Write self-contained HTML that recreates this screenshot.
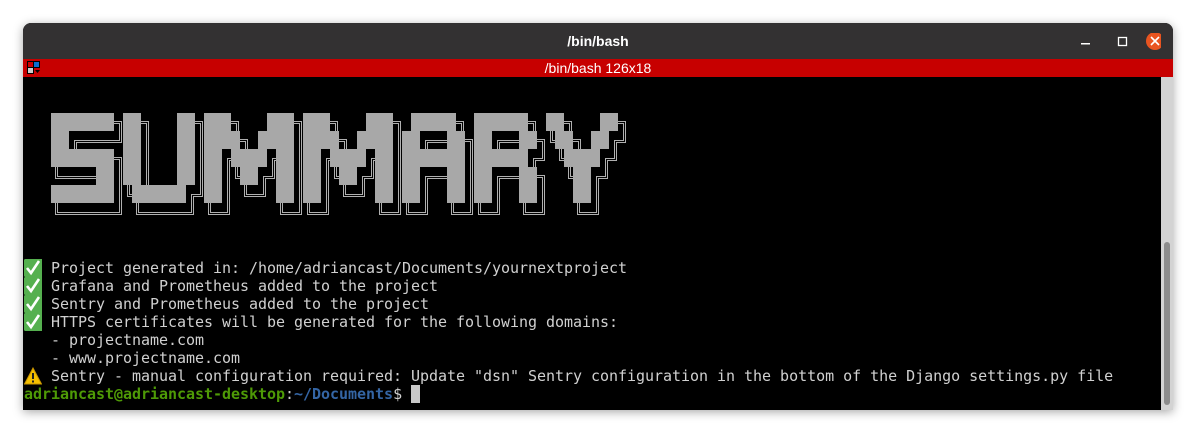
<!DOCTYPE html>
<html><head><meta charset="utf-8"><style>
*{margin:0;padding:0;box-sizing:border-box}
body{width:1193px;height:439px;background:#fff;position:relative;overflow:hidden;font-family:"Liberation Sans",sans-serif}
.win{position:absolute;left:23px;top:23px;width:1150px;height:387px;background:#000;border-radius:8px 8px 0 0;overflow:hidden;box-shadow:0 2px 10px rgba(0,0,0,.35)}
.title{position:absolute;left:0;top:0;width:1150px;height:36px;background:#333132;color:#fff;font-weight:bold;font-size:14px;text-align:center;line-height:37px}
.red{position:absolute;left:0;top:36px;width:1150px;height:18px;background:#c70000;color:#fff;font-size:14px;text-align:center;line-height:18px}
.sb{position:absolute;left:1138px;top:54px;width:12px;height:333px;background:#d3d3d3}
.thumb{position:absolute;left:3px;top:165px;width:6px;height:163px;background:#8c8c8c;border-radius:3px}
.t{position:absolute;left:1px;font-family:"DejaVu Sans Mono",monospace;font-size:15px;letter-spacing:-0.03px;line-height:18px;color:#d0d0d0;white-space:pre}
.g{color:#4e9a06;font-weight:bold}.b{color:#3465a4;font-weight:bold}
.ic{display:inline-block;width:18px;height:18px;vertical-align:top;margin-right:9px}
</style></head><body>
<div class="win">
<div class="title">/bin/bash</div>
<svg style="position:absolute;left:1058px;top:10px" width="80" height="18">
<rect x="0" y="10" width="9" height="1.5" fill="#fff"/>
<rect x="37.5" y="4.5" width="8" height="8" fill="none" stroke="#fff" stroke-width="1.3"/>
<circle cx="74" cy="8" r="9" fill="#e95420"/>
<path d="M70 4L78 12M78 4L70 12" stroke="#fff" stroke-width="1.6"/>
</svg>
<div class="red">/bin/bash 126x18</div>
<svg style="position:absolute;left:4px;top:38px" width="14" height="14">
<rect x="0.5" y="0.5" width="6" height="6" fill="#c00" stroke="#000"/>
<rect x="6.5" y="0.5" width="6" height="6" fill="#0a6fd0" stroke="#000"/>
<rect x="0.5" y="6.5" width="6" height="6" fill="#ccc" stroke="#000"/>
<path d="M8 9h5l-2.5 3z" fill="#000"/>
</svg>
<svg style="position:absolute;left:1px;top:54px" width="1137" height="333">
<defs>
<g id="M"><rect x="180" y="36" width="27" height="18"/><rect x="243" y="36" width="27" height="18"/>
<rect x="180" y="54" width="36" height="18"/><rect x="234" y="54" width="36" height="18"/>
<rect x="180" y="72" width="18" height="54"/><rect x="207" y="72" width="36" height="18"/><rect x="252" y="72" width="18" height="54"/>
<rect x="216" y="90" width="18" height="18"/></g>
<g id="L" fill="#a8a8a8">
<rect x="27" y="36" width="63" height="18"/><rect x="27" y="54" width="18" height="18"/><rect x="27" y="72" width="63" height="18"/><rect x="72" y="90" width="18" height="18"/><rect x="27" y="108" width="63" height="18"/>
<rect x="99" y="36" width="18" height="72"/><rect x="153" y="36" width="18" height="72"/><rect x="108" y="108" width="54" height="18"/>
<use href="#M"/>
<use href="#M" x="99"/>
<rect x="387" y="36" width="45" height="18"/><rect x="378" y="54" width="18" height="72"/><rect x="423" y="54" width="18" height="72"/><rect x="378" y="72" width="63" height="18"/>
<rect x="450" y="36" width="54" height="18"/><rect x="450" y="54" width="18" height="72"/><rect x="495" y="54" width="18" height="18"/><rect x="450" y="72" width="54" height="18"/><rect x="495" y="90" width="18" height="36"/>
<rect x="522" y="36" width="18" height="18"/><rect x="576" y="36" width="18" height="18"/><rect x="531" y="54" width="18" height="18"/><rect x="567" y="54" width="18" height="18"/><rect x="540" y="72" width="36" height="18"/><rect x="549" y="90" width="18" height="36"/>
</g>
<filter id="sh" x="-5%" y="-5%" width="115%" height="130%">
<feOffset in="SourceAlpha" dx="6" dy="10" result="o"/>
<feMorphology in="o" operator="dilate" radius="2" result="d2"/>
<feMorphology in="o" operator="dilate" radius="1" result="d1"/>
<feComposite in="d2" in2="d1" operator="out" result="r1"/>
<feMorphology in="o" operator="erode" radius="1" result="e1"/>
<feComposite in="o" in2="e1" operator="out" result="r2"/>
<feMerge result="m"><feMergeNode in="r1"/><feMergeNode in="r2"/></feMerge>
<feFlood flood-color="#b0b0b0"/><feComposite in2="m" operator="in"/>
</filter>
</defs>
<use href="#L" filter="url(#sh)"/>
<use href="#L"/>
</svg>
<div class="sb"><div class="thumb"></div></div>
<div class="t" style="top:236px"><svg class="ic" viewBox="0 0 18 18"><rect x="0" y="0" width="20" height="18" rx="1.5" fill="#55b04f"/><path d="M3 9l4 5 8-12" stroke="#fff" stroke-width="2.6" fill="none"/></svg>Project generated in: /home/adriancast/Documents/yournextproject
<svg class="ic" viewBox="0 0 18 18"><rect x="0" y="0" width="20" height="18" rx="1.5" fill="#55b04f"/><path d="M3 9l4 5 8-12" stroke="#fff" stroke-width="2.6" fill="none"/></svg>Grafana and Prometheus added to the project
<svg class="ic" viewBox="0 0 18 18"><rect x="0" y="0" width="20" height="18" rx="1.5" fill="#55b04f"/><path d="M3 9l4 5 8-12" stroke="#fff" stroke-width="2.6" fill="none"/></svg>Sentry and Prometheus added to the project
<svg class="ic" viewBox="0 0 18 18"><rect x="0" y="0" width="20" height="18" rx="1.5" fill="#55b04f"/><path d="M3 9l4 5 8-12" stroke="#fff" stroke-width="2.6" fill="none"/></svg>HTTPS certificates will be generated for the following domains:
   - projectname.com
   - www.projectname.com
<svg class="ic" viewBox="0 0 18 18"><path d="M9 1L17.5 17H0.5z" fill="#f5c000" stroke="#c89400" stroke-width="1"/><rect x="8" y="6" width="2" height="6" fill="#222"/><rect x="8" y="13.5" width="2" height="2" fill="#222"/></svg>Sentry - manual configuration required: Update "dsn" Sentry configuration in the bottom of the Django settings.py file
<span class="g">adriancast@adriancast-desktop</span>:<span class="b">~/Documents</span>$ <span style="background:#c8c8c8"> </span></div>
</div>
</body></html>
